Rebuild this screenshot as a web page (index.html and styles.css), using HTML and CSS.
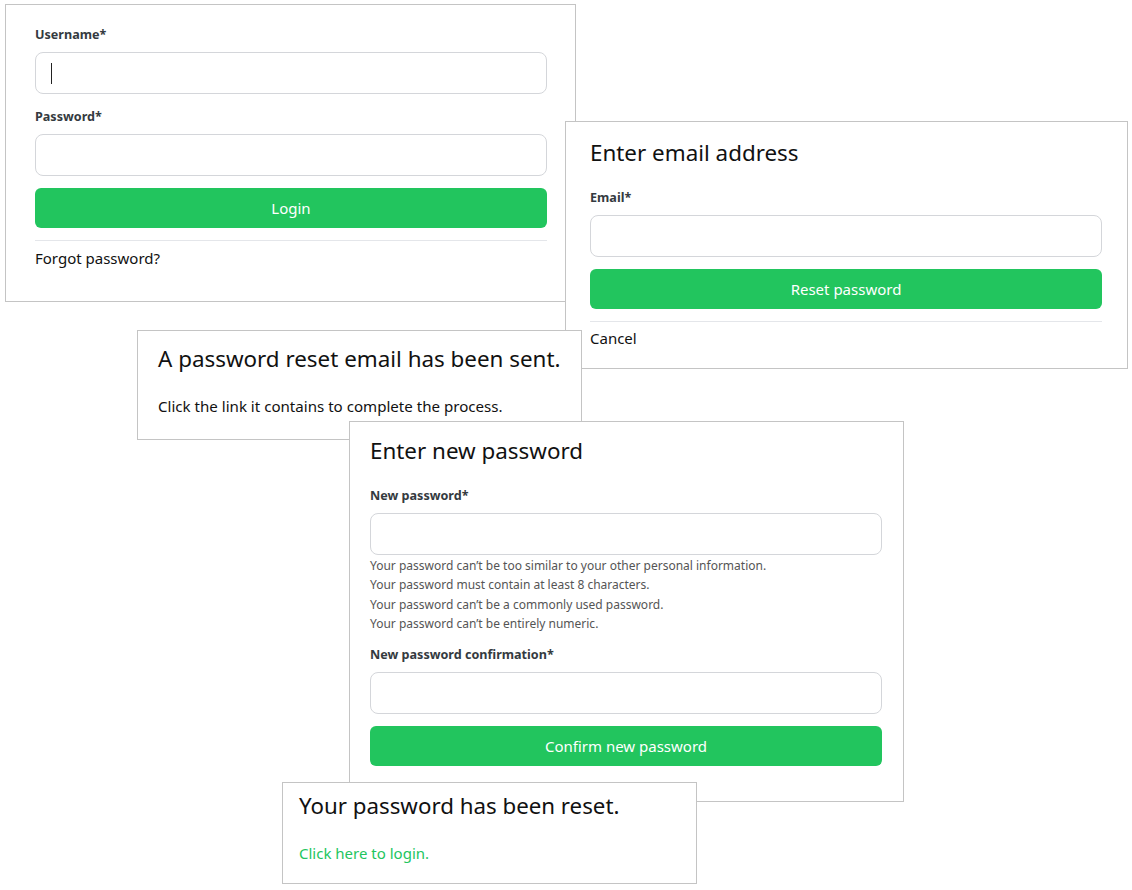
FILE: index.html
```html
<!DOCTYPE html>
<html lang="en">
<head>
<meta charset="utf-8">
<title>Password flows</title>
<link rel="stylesheet" href="styles.css">
</head>
<body>
<div class="canvas">

  <section class="card card-login">
    <div class="label">Username*</div>
    <div class="field"><span class="caret"></span></div>
    <div class="label">Password*</div>
    <div class="field"></div>
    <div class="btn">Login</div>
    <hr class="rule">
    <div class="plain">Forgot password?</div>
  </section>

  <section class="card card-email">
    <h2 class="title">Enter email address</h2>
    <div class="label">Email*</div>
    <div class="field"></div>
    <div class="btn">Reset password</div>
    <hr class="rule">
    <div class="plain">Cancel</div>
  </section>

  <section class="card card-sent">
    <h2 class="title">A password reset email has been sent.</h2>
    <p class="plain msg">Click the link it contains to complete the process.</p>
  </section>

  <section class="card card-new">
    <h2 class="title">Enter new password</h2>
    <div class="label">New password*</div>
    <div class="field"></div>
    <ul class="help">
      <li>Your password can’t be too similar to your other personal information.</li>
      <li>Your password must contain at least 8 characters.</li>
      <li>Your password can’t be a commonly used password.</li>
      <li>Your password can’t be entirely numeric.</li>
    </ul>
    <div class="label">New password confirmation*</div>
    <div class="field"></div>
    <div class="btn">Confirm new password</div>
  </section>

  <section class="card card-done">
    <h2 class="title">Your password has been reset.</h2>
    <p class="plain msg"><a class="link" href="#">Click here to login.</a></p>
  </section>

</div>
</body>
</html>
```

FILE: styles.css
```css
* { box-sizing: border-box; }

html, body {
  margin: 0;
  padding: 0;
  background: #ffffff;
}

body {
  font-family: "Noto Sans", "Open Sans", sans-serif;
  color: #111111;
}

.canvas {
  position: relative;
  width: 1132px;
  height: 890px;
  overflow: hidden;
}

.card {
  position: absolute;
  background: #ffffff;
  border: 1px solid #c4c4c4;
  display: flex;
  flex-direction: column;
}

.card-login { left: 5px;   top: 4px;   width: 571px; height: 298px; padding: 19px 28px 0 29px; }
.card-email { left: 565px; top: 121px; width: 563px; height: 248px; padding: 15px 25px 0 24px; }
.card-sent  { left: 137px; top: 330px; width: 445px; height: 110px; padding: 12px 20px 0 20px; }
.card-new   { left: 349px; top: 421px; width: 555px; height: 381px; padding: 13px 21px 0 20px; }
.card-done  { left: 282px; top: 782px; width: 415px; height: 102px; padding: 7px 16px 0 16px; }

.title {
  margin: 0 0 18px 0;
  font-size: 22.4px;
  line-height: 32px;
  font-weight: 400;
  color: #111111;
  white-space: nowrap;
}

.card-done .title { font-size: 22.3px; }

.label {
  font-size: 12.6px;
  line-height: 20px;
  padding-top: 1px;
  font-weight: 700;
  color: #343a40;
  margin-bottom: 7px;
}

.field {
  height: 42px;
  border: 1px solid #d4d6da;
  border-radius: 8px;
  background: #ffffff;
  display: flex;
  align-items: center;
  margin-bottom: 12px;
}

.caret {
  display: block;
  width: 1px;
  height: 21px;
  margin-left: 15px;
  background: #222222;
}

.btn {
  height: 40px;
  border-radius: 6px;
  background: #22c55e;
  color: #ffffff;
  font-size: 15px;
  line-height: 40px;
  text-align: center;
}

.rule {
  border: 0;
  border-top: 1px solid #e4e6ea;
  margin: 12px 0 5px 0;
  height: 0;
}

.card-email .rule { margin-bottom: 4px; }

.plain {
  font-size: 15px;
  line-height: 24px;
  color: #111111;
  margin: 0;
}

.card-sent .msg { font-size: 15.1px; }

.card-sent .title,
.card-done .title { margin-bottom: 19px; }

.link {
  color: #22c55e;
  text-decoration: none;
}

.help {
  list-style: none;
  margin: -11px 0 10px 0;
  padding: 0;
  font-size: 12px;
  line-height: 19.4px;
  color: #555555;
}
```
